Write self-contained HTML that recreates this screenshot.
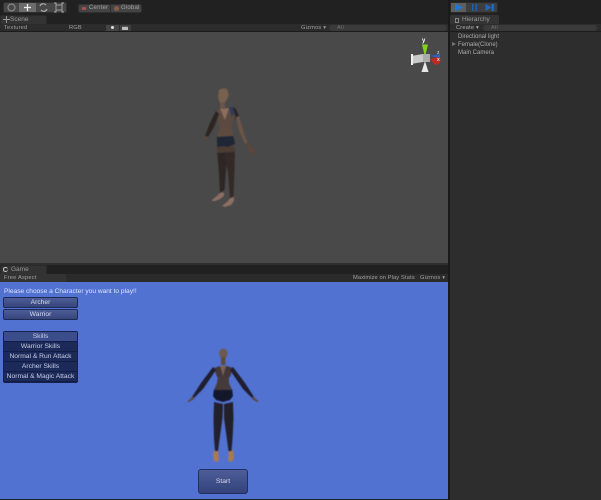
<!DOCTYPE html>
<html><head><meta charset="utf-8">
<style>
html,body{margin:0;padding:0;background:#212121;}
#p{position:relative;width:601px;height:500px;overflow:hidden;background:#212121;font-family:"Liberation Sans",sans-serif;filter:blur(.3px);}
#p div{position:absolute;box-sizing:border-box;white-space:nowrap;}
.t{color:#ababab;font-size:6px;line-height:8px;}
.g{color:#a0a0a0;font-size:5.7px;line-height:7px;letter-spacing:.2px;}
.btn{left:3px;width:75px;background:linear-gradient(#4d5d98,#36457a);border:1px solid #1d2a55;border-radius:2px;color:#d6daea;font-size:6.7px;text-align:center;}
.sk{left:4px;width:73px;height:10px;background:#1c2a5a;color:#c8cde2;font-size:6.7px;line-height:10px;text-align:center;border-bottom:1px solid #121c44;}
</style></head><body><div id="p">
<!-- toolbar -->
<div style="left:3px;top:2px;width:64px;height:11px;background:#474747;border:1px solid #2e2e2e;border-radius:2px"></div>
<div style="left:19px;top:3px;width:17px;height:9px;background:#6c6c6c"></div>
<svg style="position:absolute;left:0;top:0" width="70" height="15" fill="none">
<circle cx="11.500" cy="7.500" r="3.500" stroke="#888" stroke-width="1.200"/>
<path d="M27.500 4v7M24 7.500h7" stroke="#eee" stroke-width="1.300"/>
<path d="M40 6a3.500 3.500 0 0 1 6-1M47 9a3.500 3.500 0 0 1-6 1" stroke="#aaa" stroke-width="1.200"/>
<rect x="56" y="5" width="6" height="5" stroke="#999"/><path d="M54 3h2v2M64 3h-2v2M54 12h2v-2M64 12h-2v-2" stroke="#aaa"/>
</svg>
<div style="left:78px;top:4px;width:64px;height:9px;background:#444;border:1px solid #303030;border-radius:2px"></div>
<div style="left:110px;top:5px;width:1px;height:7px;background:#2c2c2c"></div>
<div style="left:82px;top:7px;width:4px;height:3px;background:#a0504a"></div>
<div style="left:114px;top:6px;width:5px;height:5px;border-radius:50%;background:#8a5a48"></div>
<div class="g" style="left:89px;top:5px;font-size:6px">Center</div>
<div class="g" style="left:121px;top:5px;font-size:6px">Global</div>
<!-- play buttons -->
<div style="left:450px;top:2px;width:48px;height:11px;background:#3e3e3e;border:1px solid #2a2a2a;border-radius:2px"></div>
<div style="left:451px;top:3px;width:15px;height:9px;background:#5e5e5e"></div>
<svg style="position:absolute;left:450px;top:2px" width="50" height="11"><path d="M5 1.500v8l8-4z" fill="#1e78d8"/><path d="M22 2h1.500v7H22zM25.500 2H27v7h-1.500z" fill="#1a60b8"/><path d="M35.500 2l6 3.500-6 3.500zM41.500 2H44v7h-2.500z" fill="#1a68c4"/></svg>
<!-- scene tab/bar -->
<div style="left:0;top:15px;width:47px;height:10px;background:#333;border-radius:2px 2px 0 0;border:1px solid #2a2a2a;border-bottom:0"></div>
<div class="t" style="left:10px;top:16px;color:#999;font-size:6.500px">Scene</div>
<svg style="position:absolute;left:3px;top:16px" width="7" height="7"><path d="M3.500 0v7M0 3.500h7" stroke="#999"/></svg>
<div style="left:0;top:24px;width:448px;height:8px;background:#2c2c2c;border-bottom:1px solid #1c1c1c"></div>
<div class="g" style="left:4px;top:25px">Textured</div>
<div class="g" style="left:69px;top:25px">RGB</div>
<div style="left:106px;top:25px;width:13px;height:6px;background:#444"></div>
<div style="left:120px;top:25px;width:11px;height:6px;background:#3f3f3f"></div>
<div style="left:122px;top:26px;width:6px;height:4px;background:#bbb;border-top:1px solid #555"></div>
<div style="left:111px;top:26px;width:3px;height:3px;background:#ddd;border-radius:50%"></div>
<div class="g" style="left:301px;top:25px">Gizmos ▾</div>
<div style="left:329px;top:25px;width:118px;height:6px;background:#3a3a3a;border-radius:3px"></div>
<div class="g" style="left:337px;top:25px;color:#6e6e6e">All</div>
<!-- scene view -->
<div style="left:0;top:32px;width:448px;height:231px;background:#494949"></div>
<svg style="position:absolute;left:405px;top:40px" width="40" height="34"><path d="M17 4.500h6L20 17z" fill="#86d017"/><path d="M6 16l12-2v8L6 24z" fill="#c8c8c8"/><path d="M18 14h7v8h-7z" fill="#aaa"/><path d="M25 16l10-2v4z" fill="#2c62c8"/><path d="M25 19l8-2 3 3-2 4-4 1z" fill="#c02a20"/><path d="M20 21l-3.500 11h7z" fill="#e8e8e8"/><path d="M7 14v11" stroke="#eee" stroke-width="2"/></svg>
<div style="left:422px;top:38px;font-size:6px;line-height:6px;color:#fff;font-weight:bold">y</div>
<div style="left:437px;top:50px;font-size:5px;line-height:6px;color:#ddd">z</div>
<div style="left:437px;top:57px;font-size:5px;line-height:6px;color:#ddd;font-weight:bold">x</div>
<!-- scene figure -->
<svg style="position:absolute;left:0;top:0;filter:blur(.4px)" width="448" height="263">
<path d="M212 200l6-5 3-3 3 1 0 3-4 3-5 2-3 0z" fill="#8c6f62"/>
<path d="M222 206l6-5 3-4 3 0 0 4-3 4-6 2z" fill="#8c6f62"/>
<path d="M217 150l10-1-.5 14-2 27-4.500 3-1-20z" fill="#2e2624"/>
<path d="M225 150l10-1-.5 20-1 28-3.500 1-2-26-3-12z" fill="#332a28"/>
<path d="M217 146h17l1 6-18 1z" fill="#4a3c33"/>
<path d="M217 136l16-1 2 9-8 3-3-1-7 1z" fill="#1f2636"/>
<path d="M220 127l11 0 3 9-17 1z" fill="#5f4a40"/>
<path d="M216 111l4-2 5-1 9-1 1 4-2 9-2 8h-11l-3-10z" fill="#5c4a40"/>
<path d="M220 109l5 11 4-12z" fill="#8a6e60"/>
<path d="M229 107l5 0 .5 6-3 4z" fill="#2e3c58"/>
<path d="M216 111l3 3-5 13-6 10-3-1 5-13z" fill="#2c2522"/>
<path d="M204 136l4 0-1 3-3 1z" fill="#5a463c"/>
<path d="M233 107l3 2 3 8-3 2z" fill="#2a2320"/>
<path d="M236 117l3-1 6 20 3 7-3 1-6-13z" fill="#6b5449"/>
<path d="M246 143l3 0 7 9-2 3-5-3-2-5z" fill="#5a463c"/>
<path d="M219 90q4-3 8-1l2 6-3 6-3 3-3-1-2-6z" fill="#77604f"/>
<path d="M228 94l4-1-3 3z" fill="#5d4a3e"/>
<rect x="220" y="102" width="5" height="7" fill="#6d5548"/>
</svg>
<div style="left:0;top:263px;width:448px;height:2px;background:#2e2e2e"></div>
<!-- game tab/bar -->
<div style="left:0;top:265px;width:47px;height:10px;background:#333;border-radius:2px 2px 0 0;border:1px solid #2a2a2a;border-bottom:0"></div>
<div class="t" style="left:11px;top:266px;color:#999;font-size:6.500px">Game</div>
<div style="left:3px;top:267px;width:5px;height:5px;border:1.500px solid #ccc;border-right:0;border-radius:50%"></div>
<div style="left:0;top:274px;width:448px;height:8px;background:#2b2b2b"></div>
<div style="left:0;top:274px;width:66px;height:8px;background:#333"></div>
<div class="g" style="left:4px;top:275px">Free Aspect</div>
<div class="g" style="left:353px;top:275px;letter-spacing:.1px">Maximize on Play</div>
<div class="g" style="left:401px;top:275px">Stats</div>
<div class="g" style="left:420px;top:275px">Gizmos ▾</div>
<!-- game view -->
<div style="left:0;top:282px;width:448px;height:217px;background:#5272d2"></div>
<div style="left:4px;top:288px;font-size:6.600px;line-height:8px;color:#dce3f8">Please choose a Character you want to play!!</div>
<div class="btn" style="top:297px;height:11px;line-height:9px">Archer</div>
<div class="btn" style="top:309px;height:11px;line-height:9px">Warrior</div>
<div style="left:3px;top:331px;width:75px;height:52px;background:#16214c;border-radius:2px"></div>
<div class="sk" style="top:332px;background:#3c4d8c">Skills</div>
<div class="sk" style="top:342px">Warrior Skills</div>
<div class="sk" style="top:352px">Normal &amp; Run Attack</div>
<div class="sk" style="top:362px">Archer Skills</div>
<div class="sk" style="top:372px">Normal &amp; Magic Attack</div>
<!-- game figure -->
<svg style="position:absolute;left:0;top:0;filter:blur(.4px)" width="448" height="500">
<path d="M214 450h4l1 10-2 2-3-1-1-5z" fill="#a87a54"/>
<path d="M229 450h4l1 6-1 5-3 1-2-2z" fill="#a87a54"/>
<path d="M214 402l9 2-.5 14-3 22-1.500 11h-3l-1-12-.5-20z" fill="#22202a"/>
<path d="M224 404l9-2 .5 17-1 20-1 12h-3l-1.500-11-3-22z" fill="#22202a"/>
<path d="M214 389h18l1 7-3 4-7 2-7-2-3-4z" fill="#13172a"/>
<path d="M218 376h11l0 7 3 7h-18l3-7z" fill="#453a3c"/>
<path d="M214 368l6-2h7l6 2-3 9h-13z" fill="#42363a"/>
<path d="M220 366l3 10 3-10z" fill="#7a6250"/>
<path d="M213 367l3 3-13 19-9 9-2-1 9-14z" fill="#1e1e2e"/>
<path d="M233 367l-3 3 13 19 9 9 2-1-9-14z" fill="#1e1e2e"/>
<path d="M193 396l-6 6 2 0 5-3zM253 396l6 6-2 0-5-3z" fill="#5d473c"/>
<ellipse cx="223.300" cy="353.500" rx="4.300" ry="5" fill="#6d5a4f"/>
<rect x="221" y="357" width="4.500" height="8" fill="#5e4a40"/>
</svg>
<div style="left:198px;top:469px;width:50px;height:25px;background:linear-gradient(#4d5d98,#33427a);border:1px solid #22305f;border-radius:3px;color:#d6daea;font-size:6.800px;line-height:24px;text-align:center">Start</div>
<!-- hierarchy -->
<div style="left:448px;top:0;width:2px;height:500px;background:#1a1a1a"></div>
<div style="left:450px;top:15px;width:49px;height:10px;background:#343434;border-radius:2px 2px 0 0"></div>
<div class="t" style="left:462px;top:16px;color:#999;font-size:6.500px">Hierarchy</div>
<div style="left:455px;top:18px;width:4px;height:5px;border:1px solid #888"></div>
<div style="left:450px;top:24px;width:151px;height:8px;background:#2c2c2c;border-bottom:1px solid #1c1c1c"></div>
<div class="g" style="left:456px;top:25px;color:#b0b0b0">Create ▾</div>
<div style="left:483px;top:25px;width:114px;height:6px;background:#3a3a3a;border-radius:3px"></div>
<div class="g" style="left:491px;top:25px;color:#6e6e6e">All</div>
<div style="left:450px;top:32px;width:151px;height:468px;background:#2d2d2d"></div>
<div class="t" style="left:458px;top:33px">Directional light</div>
<div class="t" style="left:458px;top:41px">Female(Clone)</div>
<div class="t" style="left:458px;top:49px">Main Camera</div>
<div style="left:452px;top:42px;width:0;height:0;border-left:4px solid #777;border-top:2.500px solid transparent;border-bottom:2.500px solid transparent"></div>
</div></body></html>
